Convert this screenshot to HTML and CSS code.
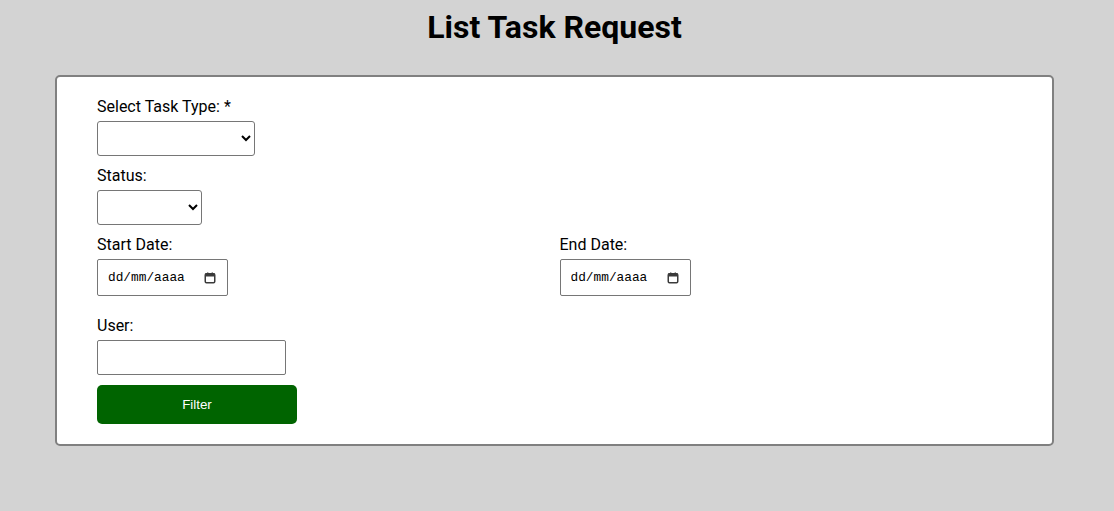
FILE: index.html
```
<!DOCTYPE html>
<html lang="pt">
<head>
<meta charset="utf-8">
<title>List Task Request</title>
<link rel="stylesheet" href="styles.css">
</head>
<body>
<div class="page">
  <h1 class="title">List Task Request</h1>
  <form class="card">
    <div class="group">
      <label class="label" for="type">Select Task Type: *</label>
      <select id="type" class="select select-type"><option></option></select>
    </div>
    <div class="group">
      <label class="label" for="status">Status:</label>
      <select id="status" class="select select-status"><option></option></select>
    </div>
    <div class="row">
      <div class="group">
        <label class="label" for="start">Start Date:</label>
        <div class="date-input">
          <input id="start" class="date-text" type="text" placeholder="dd/mm/aaaa">
          <svg class="cal" width="12" height="12" viewBox="0 0 12 12"><rect x="1.25" y="1.75" width="9.5" height="9" rx="1.2" fill="#fff" stroke="#3b3b3b" stroke-width="1.5"/><rect x="1" y="1.5" width="10" height="3" fill="#3b3b3b"/><rect x="3" y="0.5" width="1.4" height="2" fill="#3b3b3b"/><rect x="7.6" y="0.5" width="1.4" height="2" fill="#3b3b3b"/></svg>
        </div>
      </div>
      <div class="group">
        <label class="label" for="end">End Date:</label>
        <div class="date-input">
          <input id="end" class="date-text" type="text" placeholder="dd/mm/aaaa">
          <svg class="cal" width="12" height="12" viewBox="0 0 12 12"><rect x="1.25" y="1.75" width="9.5" height="9" rx="1.2" fill="#fff" stroke="#3b3b3b" stroke-width="1.5"/><rect x="1" y="1.5" width="10" height="3" fill="#3b3b3b"/><rect x="3" y="0.5" width="1.4" height="2" fill="#3b3b3b"/><rect x="7.6" y="0.5" width="1.4" height="2" fill="#3b3b3b"/></svg>
        </div>
      </div>
    </div>
    <div class="group group-user">
      <label class="label" for="user">User:</label>
      <input id="user" class="text-input" type="text">
    </div>
    <button type="button" class="button">Filter</button>
  </form>
</div>
</body>
</html>
```
FILE: styles.css
```
html, body {
  margin: 0;
  padding: 0;
}
body {
  background: #d3d3d3;
  font-family: Roboto, "Liberation Sans", Arial, sans-serif;
  color: #000;
}
.page {
  padding: 0 60px 66px 55px;
}
.title {
  margin: 8px 0 29px;
  font-size: 32px;
  line-height: 38px;
  font-weight: 700;
  text-align: center;
}
.card {
  display: flex;
  flex-direction: column;
  align-items: flex-start;
  background: #fff;
  border: 2px solid #808080;
  border-radius: 5px;
  padding: 19px 40px 20px;
}
.group {
  display: flex;
  flex-direction: column;
  align-items: flex-start;
  margin-bottom: 9px;
}
.label {
  font-size: 16px;
  line-height: 21px;
  margin-bottom: 4px;
}
.select {
  box-sizing: border-box;
  height: 35px;
  border: 1px solid #767676;
  border-radius: 3px;
  background: #fff;
  font-size: 16px;
}
.select-type {
  width: 158px;
}
.select-status {
  width: 105px;
}
.row {
  display: grid;
  grid-template-columns: 1fr 1fr;
  column-gap: 10px;
  width: 100%;
  margin-bottom: 10px;
}
.date-input {
  box-sizing: border-box;
  display: flex;
  align-items: center;
  width: 131px;
  height: 37px;
  border: 1px solid #767676;
  border-radius: 2px;
  padding: 0 11px 0 10px;
}
.date-text {
  flex: 1;
  min-width: 0;
  border: none;
  outline: none;
  padding: 0;
  font-family: "Liberation Mono", "DejaVu Sans Mono", monospace;
  font-size: 12.8px;
  color: #000;
  background: transparent;
}
.date-text::placeholder {
  color: #000;
  opacity: 1;
}
.cal {
  flex: none;
  display: block;
}
.group-user {
  margin-bottom: 10px;
}
.text-input {
  box-sizing: border-box;
  width: 189px;
  height: 35px;
  border: 1px solid #767676;
  border-radius: 2px;
  padding: 0 4px;
  font-size: 16px;
}
.button {
  width: 200px;
  height: 39px;
  border: none;
  border-radius: 5px;
  background: #006400;
  color: #fff;
  font-family: "Liberation Sans", Arial, sans-serif;
  font-size: 13.33px;
  cursor: pointer;
}
```
